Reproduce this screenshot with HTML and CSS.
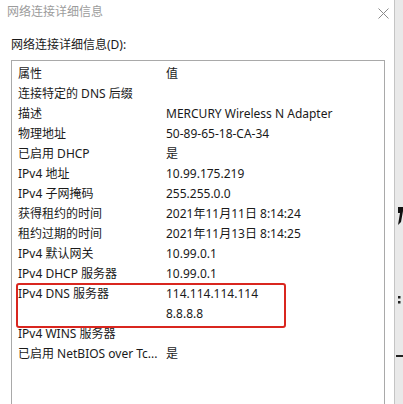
FILE: index.html
```html
<!DOCTYPE html>
<html lang="zh-CN">
<head>
<meta charset="utf-8">
<title>网络连接详细信息</title>
<link rel="stylesheet" href="styles.css">
</head>
<body>
<div class="screen">
  <div class="dialog">
    <div class="titlebar">
      <span class="title">网络连接详细信息</span>
      <span class="close">
        <svg width="11" height="11" viewBox="0 0 11 11"><path d="M0.5 0.5 L10.5 10.5 M10.5 0.5 L0.5 10.5" stroke="#8a8a8a" stroke-width="1" fill="none"/></svg>
      </span>
    </div>
    <div class="body">
      <div class="label">网络连接详细信息(D):</div>
      <div class="listbox">
        <div class="grid">
          <div class="k">属性</div><div class="v">值</div>
          <div class="k">连接特定的 DNS 后缀</div><div class="v"></div>
          <div class="k">描述</div><div class="v">MERCURY Wireless N Adapter</div>
          <div class="k">物理地址</div><div class="v">50-89-65-18-CA-34</div>
          <div class="k">已启用 DHCP</div><div class="v">是</div>
          <div class="k">IPv4 地址</div><div class="v">10.99.175.219</div>
          <div class="k">IPv4 子网掩码</div><div class="v">255.255.0.0</div>
          <div class="k">获得租约的时间</div><div class="v">2021年11月11日 8:14:24</div>
          <div class="k">租约过期的时间</div><div class="v">2021年11月13日 8:14:25</div>
          <div class="k">IPv4 默认网关</div><div class="v">10.99.0.1</div>
          <div class="k">IPv4 DHCP 服务器</div><div class="v">10.99.0.1</div>
          <div class="k">IPv4 DNS 服务器</div><div class="v">114.114.114.114</div>
          <div class="k"></div><div class="v">8.8.8.8</div>
          <div class="k">IPv4 WINS 服务器</div><div class="v"></div>
          <div class="k">已启用 NetBIOS over Tc...</div><div class="v">是</div>
        </div>
        <div class="highlight"></div>
      </div>
    </div>
  </div>
  <div class="side">
    <svg class="marks" width="8" height="404" viewBox="0 0 8 404">
      <path d="M3 207 L8 207 L8 211 L6 222 L3 225 L5 213 L3 213 Z" fill="#111"/>
      <rect x="3" y="296" width="2.5" height="2.5" fill="#222"/>
      <rect x="3" y="301" width="2.5" height="2.5" fill="#222"/>
      <rect x="1" y="355" width="7" height="2" fill="#222"/>
    </svg>
  </div>
</div>
</body>
</html>
```

FILE: styles.css
```css
html, body {
  margin: 0;
  padding: 0;
  background: #ffffff;
  overflow: hidden;
}

.screen {
  display: flex;
  width: 403px;
  height: 404px;
  font-family: "Noto Sans", "Noto Sans CJK SC", sans-serif;
  font-size: 12px;
  color: #1a1a1a;
}

.dialog {
  flex: 1;
  background: #ffffff;
  display: flex;
  flex-direction: column;
}

.titlebar {
  height: 30px;
  display: flex;
  align-items: flex-start;
  justify-content: space-between;
  padding: 4px 5px 0 7px;
}

.title {
  color: #9c9c9c;
  line-height: 16px;
}

.close {
  display: block;
  padding-top: 2px;
}

.body {
  padding: 13px 9px 0 11px;
}

.label {
  line-height: 18px;
  margin-bottom: 6px;
}

.listbox {
  position: relative;
  border: 1px solid #a9a9a9;
  border-bottom: none;
  height: 360px;
  padding: 3px 0 0 6px;
}

.grid {
  display: grid;
  grid-template-columns: 148px 1fr;
  grid-auto-rows: 20px;
  line-height: 20px;
  white-space: nowrap;
}

.highlight {
  position: absolute;
  left: 4px;
  top: 222px;
  width: 266px;
  height: 41px;
  border: 2.5px solid #d9261f;
  border-radius: 3px;
}

.side {
  width: 8px;
  border-left: 1px solid #c4c4c4;
  background: #e9e9e9;
  overflow: hidden;
}

.marks {
  display: block;
}
```
